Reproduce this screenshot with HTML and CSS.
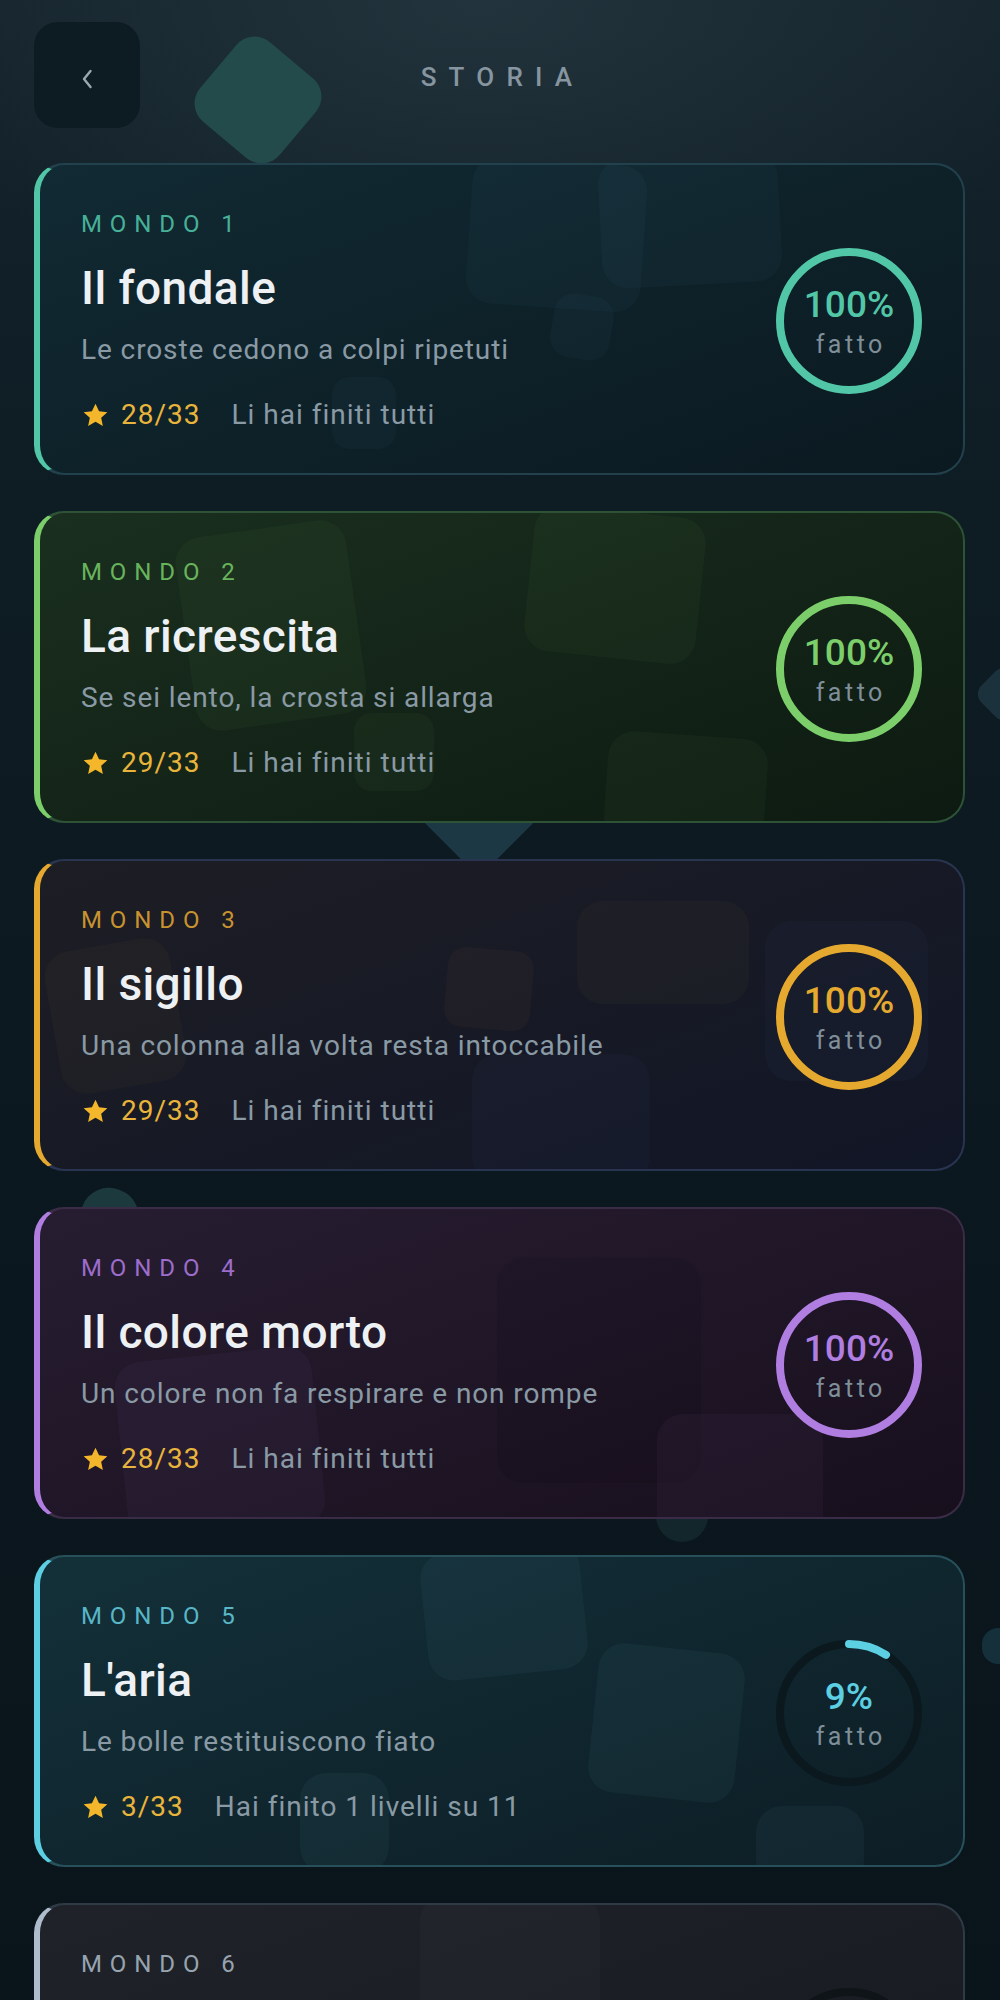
FILE: index.html
```html
<!DOCTYPE html>
<html lang="it">
<head>
	<meta charset="UTF-8">
	<title>Storia</title>
	<link rel="stylesheet" href="styles.css">
</head>
<body>

	<div class="screen">
		<div class="bg-shape s1"></div>
		<div class="bg-shape s2"></div>
		<div class="bg-shape s3"></div>
		<div class="bg-shape s4"></div>
		<div class="bg-shape s5"></div>
		<div class="bg-shape s6"></div>

		<header class="topbar">
			<a class="back" href="javascript:">
				<svg width="12" height="20" viewBox="0 0 12 20"><path d="M9.5 2 3 10l6.5 8" fill="none" stroke="#9aa8b1" stroke-width="2.4" stroke-linecap="round" stroke-linejoin="round"/></svg>
			</a>
			<h1>Storia</h1>
			<span></span>
		</header>

		<main class="worlds">
			<article class="world w1">
				<span class="blob a"></span><span class="blob b"></span><span class="blob c"></span><span class="blob d"></span>
				<div class="info">
					<div class="label">Mondo 1</div>
					<h2>Il fondale</h2>
					<p class="desc">Le croste cedono a colpi ripetuti</p>
					<div class="meta">
						<span class="score"><svg class="star" viewBox="0 0 24 24"><path d="M12 2.2l2.95 6.3 6.85.75-5.1 4.65 1.4 6.8L12 17.25 5.9 20.7l1.4-6.8-5.1-4.65 6.85-.75z"/></svg>28/33</span>
						<span class="status">Li hai finiti tutti</span>
					</div>
				</div>
				<div class="ring">
					<svg viewBox="0 0 146 146"><circle class="track" cx="73" cy="73" r="69"/><circle class="bar" cx="73" cy="73" r="69" stroke-dasharray="433.5" stroke-dashoffset="0"/></svg>
					<div class="ring-text"><strong>100%</strong><span>fatto</span></div>
				</div>
			</article>

			<article class="world w2">
				<span class="blob a"></span><span class="blob b"></span><span class="blob c"></span><span class="blob d"></span>
				<div class="info">
					<div class="label">Mondo 2</div>
					<h2>La ricrescita</h2>
					<p class="desc">Se sei lento, la crosta si allarga</p>
					<div class="meta">
						<span class="score"><svg class="star" viewBox="0 0 24 24"><path d="M12 2.2l2.95 6.3 6.85.75-5.1 4.65 1.4 6.8L12 17.25 5.9 20.7l1.4-6.8-5.1-4.65 6.85-.75z"/></svg>29/33</span>
						<span class="status">Li hai finiti tutti</span>
					</div>
				</div>
				<div class="ring">
					<svg viewBox="0 0 146 146"><circle class="track" cx="73" cy="73" r="69"/><circle class="bar" cx="73" cy="73" r="69" stroke-dasharray="433.5" stroke-dashoffset="0"/></svg>
					<div class="ring-text"><strong>100%</strong><span>fatto</span></div>
				</div>
			</article>

			<article class="world w3">
				<span class="blob a"></span><span class="blob b"></span><span class="blob c"></span><span class="blob d"></span><span class="blob e"></span>
				<div class="info">
					<div class="label">Mondo 3</div>
					<h2>Il sigillo</h2>
					<p class="desc">Una colonna alla volta resta intoccabile</p>
					<div class="meta">
						<span class="score"><svg class="star" viewBox="0 0 24 24"><path d="M12 2.2l2.95 6.3 6.85.75-5.1 4.65 1.4 6.8L12 17.25 5.9 20.7l1.4-6.8-5.1-4.65 6.85-.75z"/></svg>29/33</span>
						<span class="status">Li hai finiti tutti</span>
					</div>
				</div>
				<div class="ring">
					<svg viewBox="0 0 146 146"><circle class="track" cx="73" cy="73" r="69"/><circle class="bar" cx="73" cy="73" r="69" stroke-dasharray="433.5" stroke-dashoffset="0"/></svg>
					<div class="ring-text"><strong>100%</strong><span>fatto</span></div>
				</div>
			</article>

			<article class="world w4">
				<span class="blob a"></span><span class="blob b"></span><span class="blob c"></span>
				<div class="info">
					<div class="label">Mondo 4</div>
					<h2>Il colore morto</h2>
					<p class="desc">Un colore non fa respirare e non rompe</p>
					<div class="meta">
						<span class="score"><svg class="star" viewBox="0 0 24 24"><path d="M12 2.2l2.95 6.3 6.85.75-5.1 4.65 1.4 6.8L12 17.25 5.9 20.7l1.4-6.8-5.1-4.65 6.85-.75z"/></svg>28/33</span>
						<span class="status">Li hai finiti tutti</span>
					</div>
				</div>
				<div class="ring">
					<svg viewBox="0 0 146 146"><circle class="track" cx="73" cy="73" r="69"/><circle class="bar" cx="73" cy="73" r="69" stroke-dasharray="433.5" stroke-dashoffset="0"/></svg>
					<div class="ring-text"><strong>100%</strong><span>fatto</span></div>
				</div>
			</article>

			<article class="world w5">
				<span class="blob a"></span><span class="blob b"></span><span class="blob c"></span><span class="blob d"></span>
				<div class="info">
					<div class="label">Mondo 5</div>
					<h2>L'aria</h2>
					<p class="desc">Le bolle restituiscono fiato</p>
					<div class="meta">
						<span class="score"><svg class="star" viewBox="0 0 24 24"><path d="M12 2.2l2.95 6.3 6.85.75-5.1 4.65 1.4 6.8L12 17.25 5.9 20.7l1.4-6.8-5.1-4.65 6.85-.75z"/></svg>3/33</span>
						<span class="status">Hai finito 1 livelli su 11</span>
					</div>
				</div>
				<div class="ring">
					<svg viewBox="0 0 146 146"><circle class="track" cx="73" cy="73" r="69"/><circle class="bar" cx="73" cy="73" r="69" stroke-dasharray="433.5" stroke-dashoffset="394.5"/></svg>
					<div class="ring-text"><strong>9%</strong><span>fatto</span></div>
				</div>
			</article>

			<article class="world w6">
				<span class="blob a"></span><span class="blob b"></span>
				<div class="info">
					<div class="label">Mondo 6</div>
					<h2>Il silenzio</h2>
					<p class="desc">Completa il mondo 5 per sbloccarlo</p>
					<div class="meta">
						<span class="score"><svg class="star" viewBox="0 0 24 24"><path d="M12 2.2l2.95 6.3 6.85.75-5.1 4.65 1.4 6.8L12 17.25 5.9 20.7l1.4-6.8-5.1-4.65 6.85-.75z"/></svg>0/33</span>
						<span class="status">Hai finito 0 livelli su 11</span>
					</div>
				</div>
				<div class="ring">
					<svg viewBox="0 0 146 146"><circle class="track" cx="73" cy="73" r="69"/><circle class="bar" cx="73" cy="73" r="69" stroke-dasharray="433.5" stroke-dashoffset="433.5"/></svg>
					<div class="ring-text"><strong>0%</strong><span>fatto</span></div>
				</div>
			</article>
		</main>
	</div>

</body>
</html>
```

FILE: styles.css
```css
* {
	margin: 0;
	padding: 0;
	box-sizing: border-box;
	text-decoration: none;
}
body {
	font-family: Roboto, "Noto Sans", sans-serif;
	color: #eef1f4;
	background:
		radial-gradient(ellipse 620px 330px at 48% 0%, rgba(38, 56, 66, .75), rgba(38, 56, 66, 0)),
		linear-gradient(180deg, #15242c 0, #0e1c24 500px, #0b171e 1300px, #0a151b 2000px);
	min-height: 2000px;
}
.screen {
	position: relative;
	overflow: hidden;
	padding: 22px 35px 40px 34px;
}

/* decorative shapes in the backdrop */
.bg-shape {
	position: absolute;
	z-index: 0;
	border-radius: 24px;
}
.s1 {
	left: 206px;
	top: 48px;
	width: 104px;
	height: 104px;
	background: #234b4c;
	transform: rotate(40deg);
}
.s2 {
	left: 399px;
	top: 684px;
	width: 160px;
	height: 160px;
	background: #1c3844;
	transform: rotate(45deg);
	border-radius: 18px;
}
.s3 {
	left: 80px;
	top: 1188px;
	width: 58px;
	height: 60px;
	background: #1c3a3e;
	border-radius: 28px;
	transform: rotate(20deg);
}
.s4 {
	left: 656px;
	top: 1470px;
	width: 52px;
	height: 72px;
	background: #12262c;
	border-radius: 26px;
}
.s5 {
	left: 982px;
	top: 672px;
	width: 44px;
	height: 44px;
	background: #1b323d;
	transform: rotate(45deg);
	border-radius: 12px;
}
.s6 {
	left: 982px;
	top: 1628px;
	width: 36px;
	height: 36px;
	background: #15303a;
	border-radius: 16px;
}

.topbar {
	position: relative;
	z-index: 1;
	display: grid;
	grid-template-columns: 106px 1fr 106px;
	align-items: center;
	margin-bottom: 35px;
}
.back {
	width: 106px;
	height: 106px;
	border-radius: 24px;
	background: #0d1b22;
	display: flex;
	align-items: center;
	justify-content: center;
	padding-top: 8px;
}
.topbar h1 {
	text-align: center;
	font-size: 26px;
	font-weight: 500;
	letter-spacing: .47em;
	text-transform: uppercase;
	color: #8795a0;
	padding-left: 6px;
	padding-top: 4px;
}

.worlds {
	position: relative;
	z-index: 1;
	display: flex;
	flex-direction: column;
	gap: 36px;
}
.world {
	position: relative;
	overflow: hidden;
	display: flex;
	align-items: center;
	justify-content: space-between;
	padding: 44px 41px 40px 41px;
	border: 2px solid var(--line);
	border-left: 6px solid var(--accent);
	border-radius: 30px;
	background: linear-gradient(160deg, var(--bg1), var(--bg2));
}
.info,
.ring {
	position: relative;
	z-index: 1;
}
.blob {
	position: absolute;
	z-index: 0;
	border-radius: 26px;
	background: var(--blob);
}

.label {
	font-size: 24px;
	line-height: 30px;
	letter-spacing: .33em;
	text-transform: uppercase;
	color: var(--label);
}
.world h2 {
	margin-top: 21px;
	font-size: 46px;
	line-height: 56px;
	font-weight: 500;
	letter-spacing: .4px;
	color: #eef1f4;
}
.desc {
	margin-top: 16px;
	font-size: 28px;
	line-height: 36px;
	letter-spacing: .9px;
	color: #8a9aa5;
}
.meta {
	margin-top: 29px;
	display: flex;
	align-items: center;
	font-size: 28px;
	line-height: 36px;
	letter-spacing: 1px;
}
.score {
	display: flex;
	align-items: center;
	gap: 11px;
	color: #e8b43b;
}
.star {
	width: 29px;
	height: 29px;
	fill: #f4b62a;
}
.status {
	margin-left: 31px;
	color: #8a9aa5;
}

.ring {
	width: 146px;
	height: 146px;
	display: grid;
	place-items: center;
}
.ring svg {
	grid-area: 1 / 1;
	width: 146px;
	height: 146px;
	transform: rotate(-90deg);
}
.ring circle {
	fill: none;
	stroke-width: 8;
}
.ring .track {
	stroke: var(--track);
}
.ring .bar {
	stroke: var(--accent);
	stroke-linecap: round;
}
.ring-text {
	grid-area: 1 / 1;
	display: flex;
	flex-direction: column;
	align-items: center;
	padding-top: 2px;
}
.ring-text strong {
	font-size: 37px;
	line-height: 40px;
	font-weight: 500;
	color: var(--accent);
}
.ring-text span {
	margin-top: 5px;
	font-size: 25px;
	line-height: 30px;
	letter-spacing: .14em;
	padding-left: .14em;
	color: #7f8f99;
}

/* world colours */
.w1 {
	--accent: #52c7a7;
	--label: #47b198;
	--line: #22414c;
	--bg1: #112a33;
	--bg2: #0b1920;
	--blob: rgba(110, 190, 200, .04);
	--track: #0b1a20;
}
.w2 {
	--accent: #7cce6b;
	--label: #68b45c;
	--line: #2d5236;
	--bg1: #1a2f1f;
	--bg2: #0d1a11;
	--blob: rgba(140, 200, 120, .045);
	--track: #0c170f;
}
.w3 {
	--accent: #e5a92f;
	--label: #c8932f;
	--line: #293450;
	--bg1: #1d1d24;
	--bg2: #111626;
	--blob: rgba(230, 180, 110, .03);
	--track: #0e121c;
}
.w4 {
	--accent: #b07de0;
	--label: #9c6dcb;
	--line: #3a2c46;
	--bg1: #271d31;
	--bg2: #180f1d;
	--blob: rgba(190, 140, 230, .045);
	--track: #130c18;
}
.w5 {
	--accent: #5ccfe3;
	--label: #58b6c6;
	--line: #27505b;
	--bg1: #133039;
	--bg2: #0d1d25;
	--blob: rgba(120, 200, 220, .05);
	--track: #0b181e;
}
.w6 {
	--accent: #aebccb;
	--label: #97a4b0;
	--line: #2e3a45;
	--bg1: #1f2329;
	--bg2: #161a20;
	--blob: rgba(200, 210, 225, .025);
	--track: #0f1418;
}

/* shapes inside the cards */
.w1 .a { left: 429px; top: -4px; width: 175px; height: 147px; transform: rotate(4deg); }
.w1 .b { left: 560px; top: -10px; width: 180px; height: 130px; transform: rotate(-3deg); }
.w1 .c { left: 512px; top: 130px; width: 60px; height: 64px; transform: rotate(10deg); border-radius: 20px; }
.w1 .d { left: 292px; top: 212px; width: 64px; height: 72px; border-radius: 18px; }

.w2 .a { left: 145px; top: 15px; width: 172px; height: 195px; transform: rotate(-8deg); }
.w2 .b { left: 489px; top: -2px; width: 172px; height: 147px; transform: rotate(6deg); }
.w2 .c { left: 566px; top: 222px; width: 160px; height: 110px; transform: rotate(4deg); }
.w2 .d { left: 314px; top: 200px; width: 80px; height: 78px; border-radius: 18px; }

.w3 .a { left: 406px; top: 88px; width: 86px; height: 80px; transform: rotate(5deg); border-radius: 18px; background: rgba(220, 160, 100, .04); }
.w3 .b { left: 537px; top: 40px; width: 172px; height: 103px; }
.w3 .c { left: 725px; top: 60px; width: 163px; height: 160px; background: rgba(40, 55, 90, .12); }
.w3 .d { left: 12px; top: 83px; width: 127px; height: 144px; transform: rotate(-10deg); }
.w3 .e { left: 432px; top: 193px; width: 178px; height: 130px; background: rgba(50, 65, 110, .08); }

.w4 .a { left: 81px; top: 145px; width: 198px; height: 180px; transform: rotate(-6deg); }
.w4 .b { left: 457px; top: 49px; width: 204px; height: 225px; background: rgba(0, 0, 0, .07); }
.w4 .c { left: 617px; top: 205px; width: 166px; height: 130px; }

.w5 .a { left: 384px; top: -10px; width: 160px; height: 128px; transform: rotate(-6deg); }
.w5 .b { left: 553px; top: 91px; width: 147px; height: 150px; transform: rotate(6deg); }
.w5 .c { left: 260px; top: 216px; width: 89px; height: 100px; }
.w5 .d { left: 716px; top: 249px; width: 108px; height: 80px; }

.w6 .a { left: 380px; top: -10px; width: 180px; height: 200px; }
.w6 .b { left: 100px; top: 110px; width: 150px; height: 150px; }
```
